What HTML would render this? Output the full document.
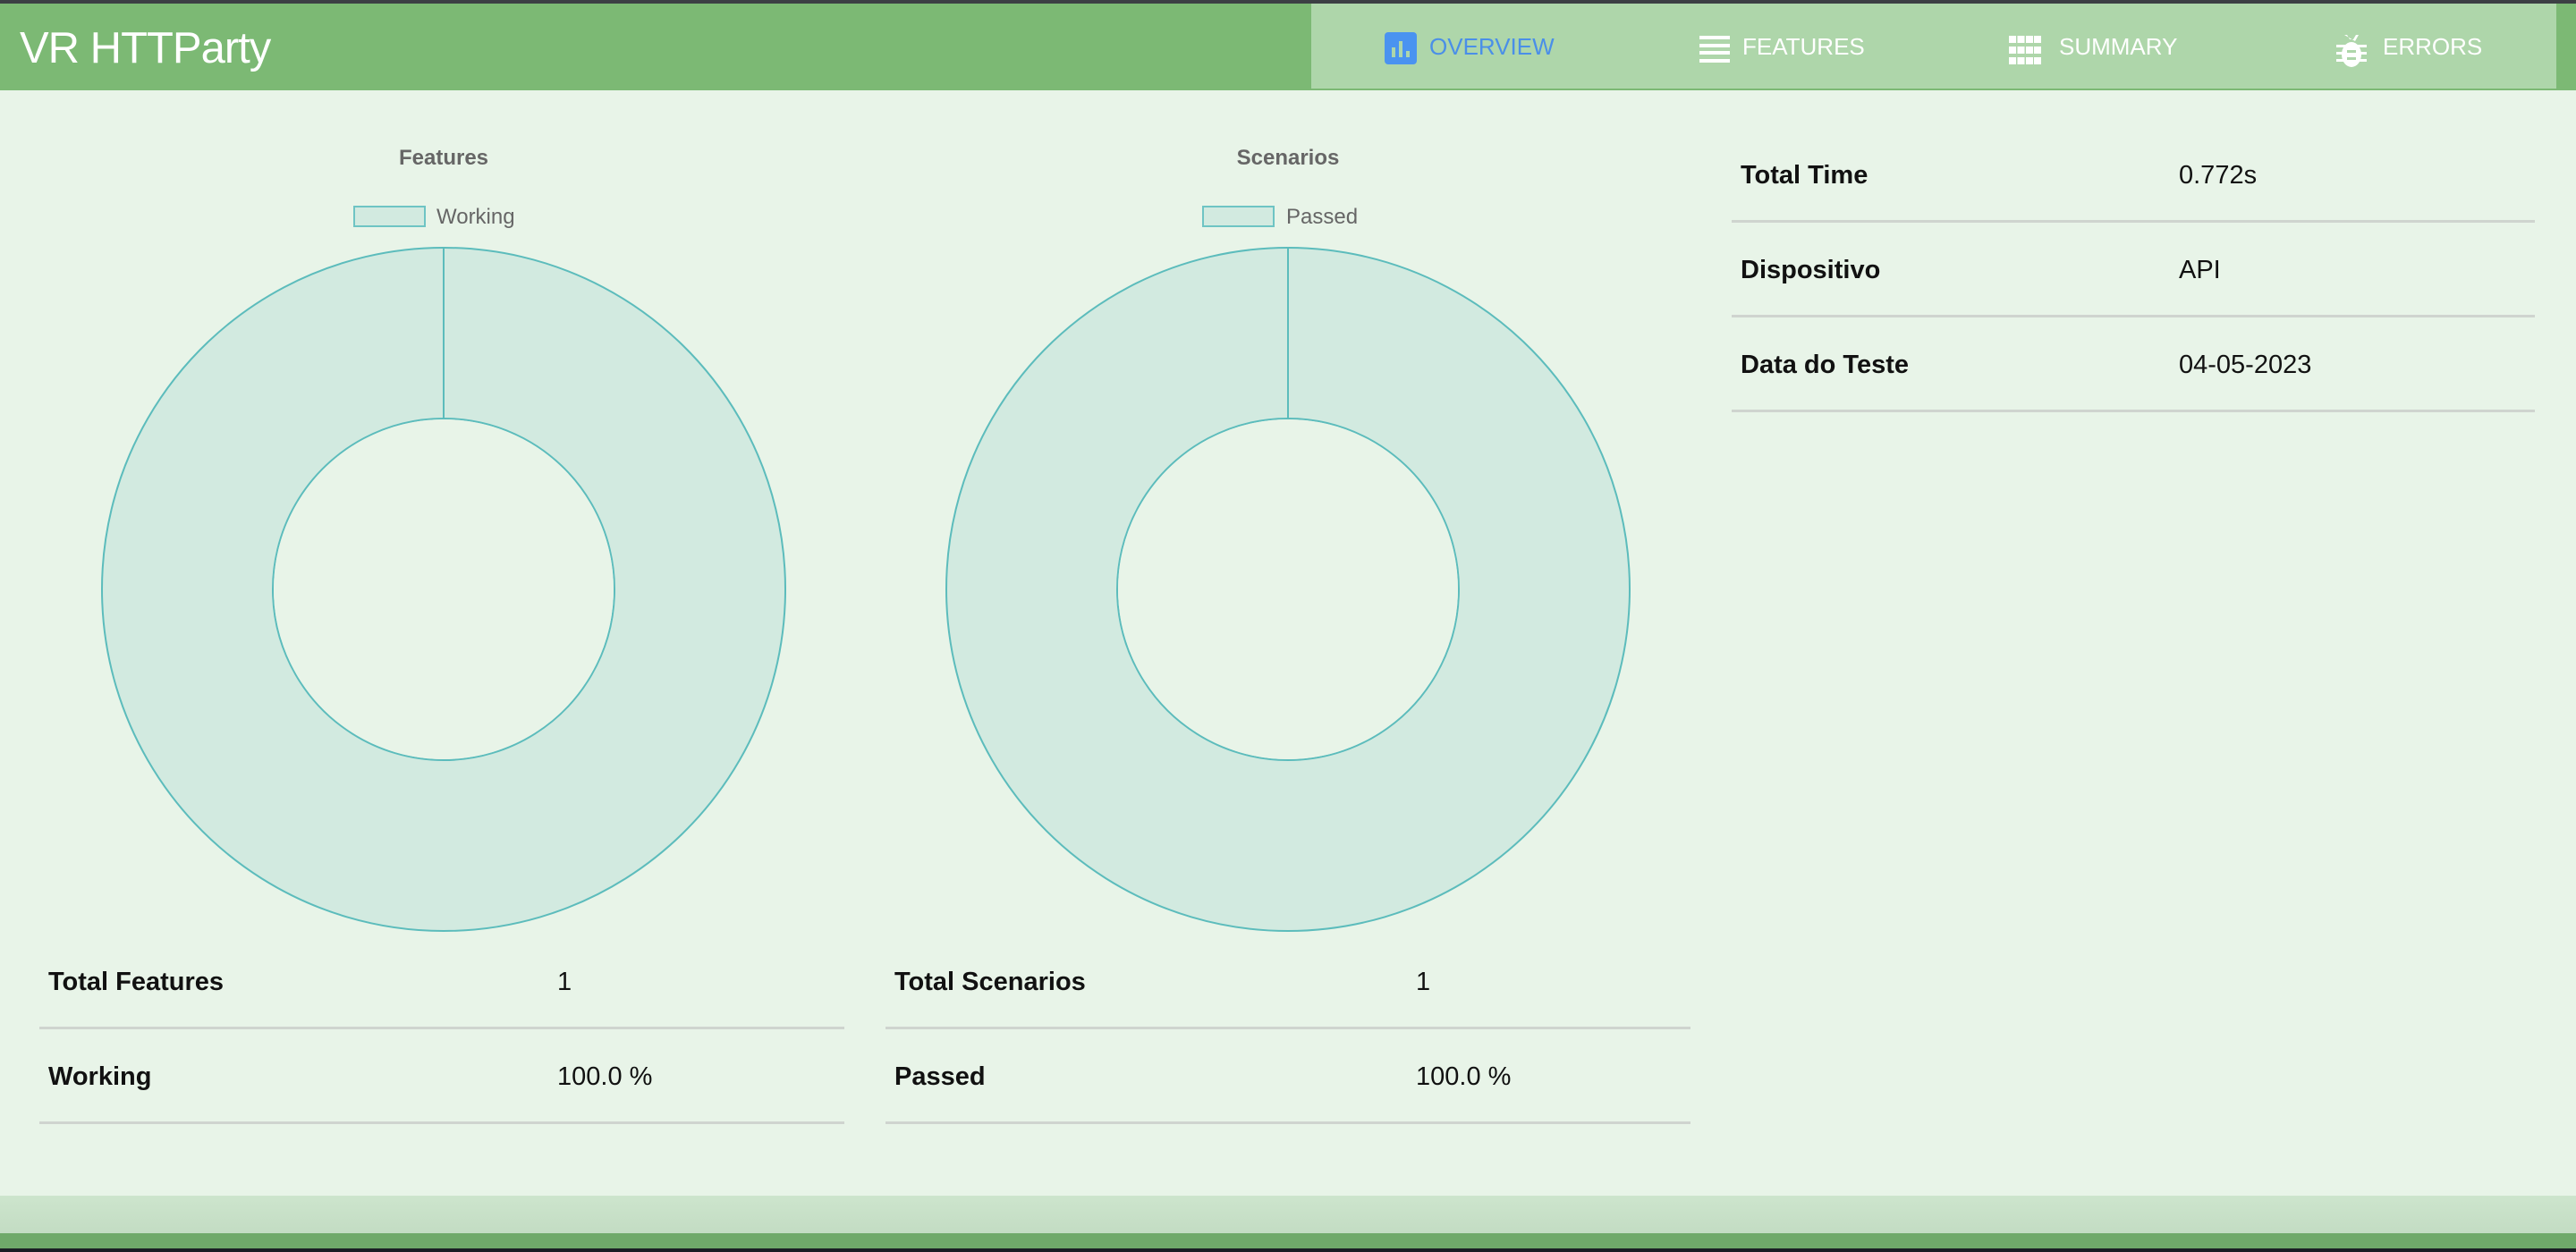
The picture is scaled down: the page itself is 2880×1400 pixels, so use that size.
<!DOCTYPE html>
<html><head><meta charset="utf-8">
<style>
*{margin:0;padding:0;box-sizing:border-box}
html,body{width:2880px;height:1400px;overflow:hidden;background:#e8f4e8;font-family:"Liberation Sans",sans-serif;position:relative}
.abs{position:absolute}
#top{left:0;top:0;width:2880px;height:4px;background:#3c3f44}
#hdr{left:0;top:4px;width:2880px;height:97px;background:#7cb974}
#nav{left:1464px;top:4px;width:1394px;height:95px;background:#aed6aa;border-left:2px solid #7cb974}
#title{left:22px;top:24px;color:#fff;font-size:49px;line-height:60px;letter-spacing:-1px}
.nt{position:absolute;top:31px;font-size:26px;line-height:34px;color:#fff}
.ct{position:absolute;font-size:24px;font-weight:bold;color:#666;top:163px;transform:translateX(-50%)}
.lg{position:absolute;top:230px;width:81px;height:24px;background:#d2eae0;border:2px solid #6ec4c4}
.lt{position:absolute;top:229px;font-size:24px;color:#666}
.row{position:absolute;height:106px;border-bottom:3px solid #cfd4cf;font-size:29px;color:#111}
.row b{position:absolute;top:37px;left:10px}
.row span{position:absolute;top:37px}
#f1{left:0;top:1337px;width:2880px;height:42px;background:linear-gradient(#cde5cd,#c3dcc3)}
#f2{left:0;top:1379px;width:2880px;height:17px;background:#6fa96a}
#f3{left:0;top:1396px;width:2880px;height:4px;background:#1a1e24}
</style></head><body>
<div id="top" class="abs"></div>
<div id="hdr" class="abs"></div>
<div id="nav" class="abs">
  <svg style="position:absolute;left:82px;top:32px" width="36" height="36" viewBox="0 0 36 36"><rect width="36" height="36" rx="4" fill="#4a93f0"/><rect x="8" y="17" width="4" height="11" fill="#aed6aa"/><rect x="16" y="10" width="4" height="18" fill="#aed6aa"/><rect x="24" y="21" width="4" height="7" fill="#aed6aa"/></svg>
  <div class="nt" style="left:132px;color:#4a8fe8">OVERVIEW</div>
  <svg style="position:absolute;left:434px;top:36px" width="34" height="30" viewBox="0 0 34 30"><g fill="#fff"><rect y="0" width="34" height="4"/><rect y="9" width="34" height="4"/><rect y="17" width="34" height="4"/><rect y="26" width="34" height="4"/></g></svg>
  <div class="nt" style="left:482px">FEATURES</div>
  <svg style="position:absolute;left:780px;top:36px" width="36" height="32" viewBox="0 0 36 32"><g fill="#fff"><rect x="0" y="0" width="8" height="8"/><rect x="9.5" y="0" width="8" height="8"/><rect x="19" y="0" width="8" height="8"/><rect x="28" y="0" width="8" height="8"/><rect x="0" y="12" width="8" height="8"/><rect x="9.5" y="12" width="8" height="8"/><rect x="19" y="12" width="8" height="8"/><rect x="28" y="12" width="8" height="8"/><rect x="0" y="24" width="8" height="8"/><rect x="9.5" y="24" width="8" height="8"/><rect x="19" y="24" width="8" height="8"/><rect x="28" y="24" width="8" height="8"/></g></svg>
  <div class="nt" style="left:836px">SUMMARY</div>
  <svg style="position:absolute;left:1146px;top:33px" width="34" height="38" viewBox="0 0 34 38"><g fill="#fff"><path d="M9 2l3 0 3 5h4l3-5 3 0-4 7z"/><ellipse cx="17" cy="24" rx="11" ry="14"/><rect x="0" y="13" width="34" height="3"/><rect x="0" y="21" width="34" height="3"/><rect x="0" y="29" width="34" height="3"/></g><g fill="#aed6aa"><rect x="12" y="19" width="10" height="3"/><rect x="12" y="27" width="10" height="3"/></g></svg>
  <div class="nt" style="left:1198px">ERRORS</div>
</div>
<div id="title" class="abs">VR HTTParty</div>

<div class="ct" style="left:496px">Features</div>
<div class="lg" style="left:395px"></div><div class="lt" style="left:488px">Working</div>
<div class="ct" style="left:1440px">Scenarios</div>
<div class="lg" style="left:1344px"></div><div class="lt" style="left:1438px">Passed</div>

<svg class="abs" style="left:0;top:0" width="2880" height="1400">
  <g fill="#d2eae0" stroke="#5cbcbc" stroke-width="2">
    <path fill-rule="evenodd" d="M496 277a382 382 0 1 0 0.01 0zM496 468a191 191 0 1 1 -0.01 0z"/>
    <line x1="496" y1="277" x2="496" y2="468"/>
    <path fill-rule="evenodd" d="M1440 277a382 382 0 1 0 0.01 0zM1440 468a191 191 0 1 1 -0.01 0z"/>
    <line x1="1440" y1="277" x2="1440" y2="468"/>
  </g>
  <circle cx="496" cy="659" r="190" fill="#e8f4e8"/>
  <circle cx="1440" cy="659" r="190" fill="#e8f4e8"/>
</svg>

<div class="row" style="left:44px;top:1045px;width:900px"><b>Total Features</b><span style="left:579px">1</span></div>
<div class="row" style="left:44px;top:1151px;width:900px"><b>Working</b><span style="left:579px">100.0 %</span></div>
<div class="row" style="left:990px;top:1045px;width:900px"><b>Total Scenarios</b><span style="left:593px">1</span></div>
<div class="row" style="left:990px;top:1151px;width:900px"><b>Passed</b><span style="left:593px">100.0 %</span></div>

<div class="row" style="left:1936px;top:143px;width:898px"><b>Total Time</b><span style="left:500px">0.772s</span></div>
<div class="row" style="left:1936px;top:249px;width:898px"><b>Dispositivo</b><span style="left:500px">API</span></div>
<div class="row" style="left:1936px;top:355px;width:898px"><b>Data do Teste</b><span style="left:500px">04-05-2023</span></div>

<div id="f1" class="abs"></div>
<div id="f2" class="abs"></div>
<div id="f3" class="abs"></div>
</body></html>
